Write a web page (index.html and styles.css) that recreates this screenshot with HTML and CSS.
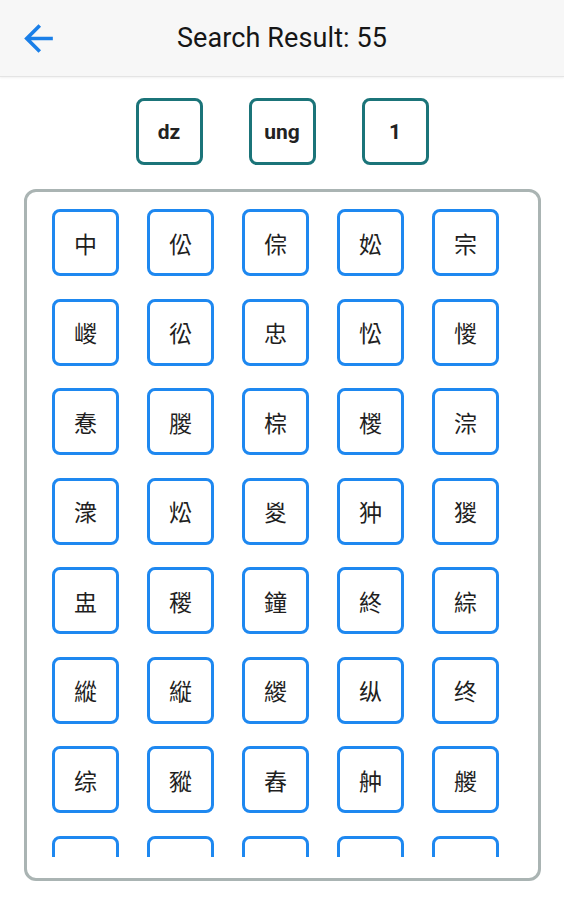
FILE: index.html
```html
<!DOCTYPE html>
<html lang="zh-Hant">
<head>
<meta charset="utf-8">
<title>Search Result</title>
<link rel="stylesheet" href="styles.css">
</head>
<body>
<header class="topbar">
  <div class="back">
    <svg class="back-icon" viewBox="0 0 24 24" width="43" height="43"><path d="M20 11H7.83l5.59-5.59L12 4l-8 8 8 8 1.41-1.41L7.83 13H20v-2z" fill="#1a7fe8"/></svg>
  </div>
  <h1 class="title">Search Result: 55</h1>
  <div></div>
</header>
<div class="chips">
  <div class="chip">dz</div>
  <div class="chip">ung</div>
  <div class="chip">1</div>
</div>
<div class="panel">
  <div class="scroller">
    <div class="grid">
      <div class="cell">中</div><div class="cell">伀</div><div class="cell">倧</div><div class="cell">妐</div><div class="cell">宗</div>
      <div class="cell">嵕</div><div class="cell">彸</div><div class="cell">忠</div><div class="cell">忪</div><div class="cell">惾</div>
      <div class="cell">惷</div><div class="cell">朡</div><div class="cell">棕</div><div class="cell">椶</div><div class="cell">淙</div>
      <div class="cell">潨</div><div class="cell">炂</div><div class="cell">㚇</div><div class="cell">狆</div><div class="cell">猣</div>
      <div class="cell">盅</div><div class="cell">稯</div><div class="cell">鐘</div><div class="cell">終</div><div class="cell">綜</div>
      <div class="cell">縱</div><div class="cell">縦</div><div class="cell">緵</div><div class="cell">纵</div><div class="cell">终</div>
      <div class="cell">综</div><div class="cell">豵</div><div class="cell">舂</div><div class="cell">舯</div><div class="cell">艐</div>
      <div class="cell">蹤</div><div class="cell">踪</div><div class="cell">鍐</div><div class="cell">鬃</div><div class="cell">鬉</div>
    </div>
  </div>
</div>
</body>
</html>
```
FILE: styles.css
```css
* { box-sizing: border-box; }
body {
  margin: 0;
  background: #ffffff;
  font-family: Roboto, "Noto Sans", "Noto Sans CJK TC", sans-serif;
  color: #1c1c1c;
}
.topbar {
  height: 77px;
  background: #f7f7f7;
  border-bottom: 1px solid #e4e4e4;
  box-shadow: 0 1px 2px rgba(0,0,0,0.06);
  display: grid;
  grid-template-columns: 1fr auto 1fr;
  align-items: center;
}
.back {
  padding-left: 17px;
  display: flex;
  align-items: center;
}
.back-icon { display: block; }
.title {
  margin: 0;
  font-size: 27px;
  font-weight: 400;
  color: #161616;
  letter-spacing: 0.1px;
}
.chips {
  margin-top: 21px;
  display: flex;
  justify-content: center;
  gap: 46px;
}
.chip {
  width: 67px;
  height: 67px;
  border: 3px solid #1b7479;
  border-radius: 8px;
  display: flex;
  align-items: center;
  justify-content: center;
  font-size: 21px;
  font-weight: 700;
  color: #222;
}
.panel {
  margin: 24px 23px 0 24px;
  height: 692px;
  border: 3px solid #aab4b3;
  border-radius: 12px;
}
.scroller {
  height: 665px;
  overflow: hidden;
  padding: 17px 0 0 11px;
}
.grid {
  display: grid;
  grid-template-columns: repeat(5, 95px);
  row-gap: 22.5px;
}
.cell {
  justify-self: center;
  width: 67px;
  height: 67px;
  border: 3px solid #1e88f0;
  border-radius: 8px;
  display: flex;
  align-items: center;
  justify-content: center;
  font-family: "Noto Sans CJK TC", "Noto Sans CJK SC", sans-serif;
  font-size: 23px;
  color: #1f1f1f;
}
```
